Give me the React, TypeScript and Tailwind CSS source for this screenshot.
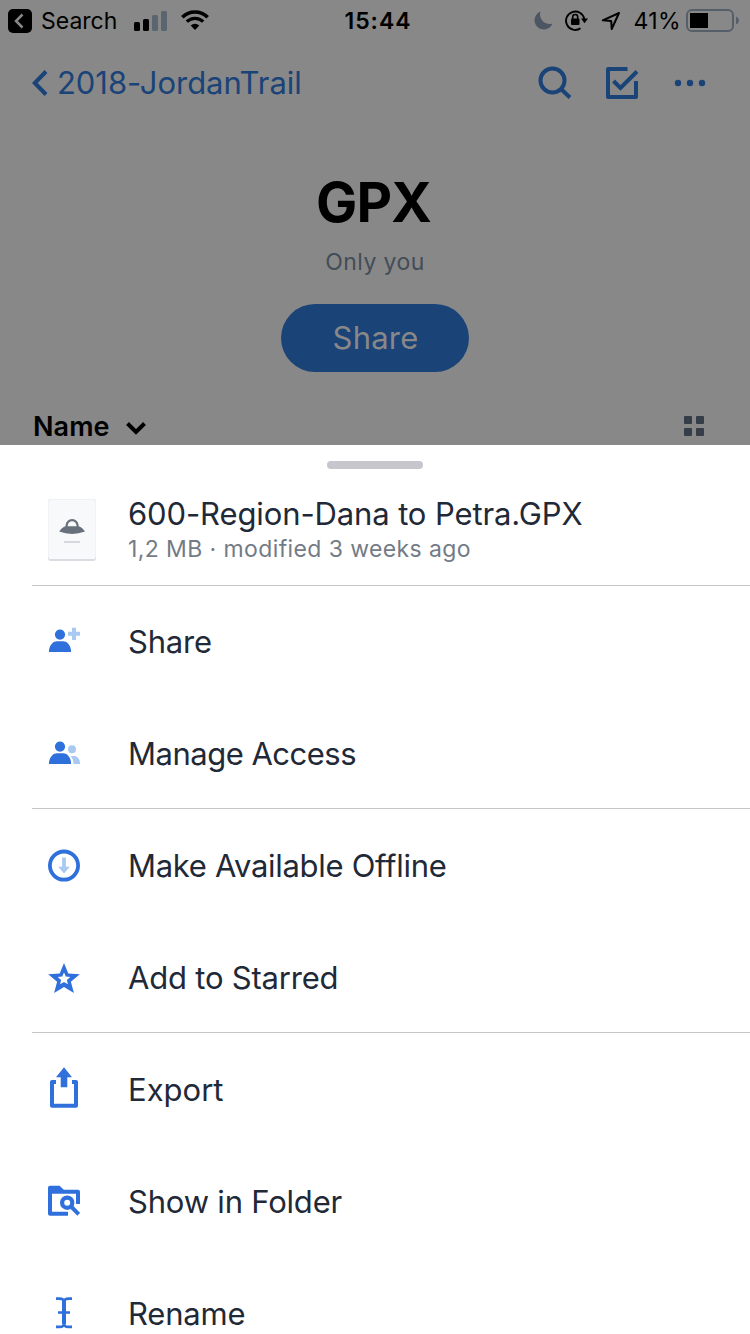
import type { ReactNode } from "react";

interface ActionRowProps {
  icon: ReactNode;
  label: string;
  className?: string;
}

function ActionRow({ icon, label, className = "" }: ActionRowProps) {
  return (
    <button className="flex h-[112px] w-full shrink-0 items-center pl-4 text-left">
      <svg width="32" height="48" viewBox="0 0 32 48" fill="none" className="shrink-0">
        {icon}
      </svg>
      <span className={`ml-12 whitespace-nowrap pt-0.5 text-[31px] leading-10 ${className}`}>
        {label}
      </span>
    </button>
  );
}

const BLUE = "#2f70dc";
const LIGHT = "#a9c9f2";

const person = (
  <g fill={BLUE}>
    <circle cx="12" cy="17.6" r="5.1" />
    <path d="M1 35v-1.6C1.6 27.6 5.4 24.3 9 24.3h6c3.800 0 7.400 3.300 8 9.100V35z" />
  </g>
);

const icons = {
  share: (
    <>
      {person}
      <path d="M24 10.700h4v4h4v4h-4v4.300h-4v-4.300h-4v-4h4z" fill={LIGHT} />
    </>
  ),
  access: (
    <>
      {person}
      <circle cx="24" cy="20.300" r="4" fill={LIGHT} />
      <path d="M22.500 27h4c3.200.4 5.300 3.200 5.500 7v1h-6.500c0-3.200-1-5.900-3-8z" fill={LIGHT} />
    </>
  ),
  offline: (
    <>
      <circle cx="16" cy="24.600" r="14.100" stroke={BLUE} strokeWidth="3.800" />
      <path d="M14.100 16.500h3.800v9.200h3.900L16 32.500l-5.800-6.800h3.900z" fill={LIGHT} />
    </>
  ),
  star: (
    <path
      fill={BLUE}
      fillRule="evenodd"
      d="M16 10l4.300 10.600L31.800 21.200l-8.900 7.500 3 11.200L16 34l-9.900 5.900 3-11.200L.2 21.200l11.500-.6zM16 19.400l-1.800 4.200-4.500.4 3.400 2.900-1 4.400L16 29l3.900 2.300-1-4.400 3.400-2.900-4.500-.4z"
    />
  ),
  export: (
    <>
      <path d="M8 17H4v23.700h24V17h-4" stroke={BLUE} strokeWidth="4" strokeLinejoin="round" />
      <path d="M16 2.300l8 10h-4.700v10h-6.600v-10H8z" fill={BLUE} />
    </>
  ),
  folder: (
    <>
      <path
        fill={BLUE}
        d="M2 8.700h9.500l4.300 4H30q2 0 2 2V27h-4V16.700H4v18h16v4H2q-2 0-2-2v-26q0-2 2-2z"
      />
      <circle cx="19.200" cy="25.700" r="5.100" stroke={BLUE} strokeWidth="4.200" />
      <path d="M22.500 29l8.300 8.300" stroke={BLUE} strokeWidth="4" />
    </>
  ),
  rename: (
    <>
      <path d="M16 12v23" stroke={BLUE} strokeWidth="4" />
      <path
        d="M8 9.600h3.500c2.500 0 4.500 1 4.500 3.500 0-2.500 2-3.500 4.500-3.500H24M8 37.900h3.500c2.500 0 4.500-1 4.500-3.500 0 2.500 2 3.500 4.500 3.500H24M10 23.500h12"
        stroke={BLUE}
        strokeWidth="2.600"
      />
    </>
  ),
};

function StatusBar() {
  return (
    <div className="grid h-10 grid-cols-[1fr_auto_1fr] items-center pt-0.5 text-black">
      <div className="flex items-center pl-2">
        <svg width="24" height="24" viewBox="0 0 24 24" fill="none">
          <rect width="24" height="24" rx="5" fill="#000" />
          <path d="M14.500 5.500L8 12l6.500 6.500" stroke="#888" strokeWidth="2.500" />
        </svg>
        <span className="ml-[9px] w-[85px] whitespace-nowrap text-[23px] leading-6">
          Search
        </span>
        <svg width="34" height="20" viewBox="0 0 34 20" className="ml-2">
          <rect y="11" width="6" height="9" rx="1.500" />
          <rect x="9" y="8" width="6" height="12" rx="1.500" />
          <rect x="18" y="4" width="6" height="16" rx="1.500" fill="#5b6570" />
          <rect x="27" width="6" height="20" rx="1.500" fill="#5b6570" />
        </svg>
        <svg width="28" height="20" viewBox="0 0 28 20" fill="none" stroke="#000" className="mb-0.5 ml-[13px]">
          <path d="M1.300 7.200a18 18 0 0 1 25.400 0" strokeWidth="3.600" />
          <path d="M5.800 11.700a11.600 11.600 0 0 1 16.400 0" strokeWidth="3.200" />
          <path d="M14 20l-4.300-4.600a6.300 6.300 0 0 1 8.600 0z" fill="#000" stroke="none" />
        </svg>
      </div>
      <span className="pl-1.5 text-[23px] font-semibold leading-6 tracking-[1px]">15:44</span>
      <div className="flex items-center justify-end pr-[10px]">
        <svg width="19" height="19" viewBox="0 0 19 19" className="mb-0.5 mr-3">
          <path d="M6.500.5a9.300 9.300 0 1 0 12 12A9.500 9.500 0 0 1 6.500.5z" fill="#4c5662" />
        </svg>
        <svg width="24" height="22" viewBox="0 0 24 22" fill="none" className="mb-[3px] mr-3">
          <path d="M15.500 19.300A9.200 9.200 0 1 1 19.300 10" stroke="#000" strokeWidth="1.900" />
          <path d="M16 9.500h7l-3.500 4.700z" fill="#000" />
          <rect x="6" y="9.500" width="8.500" height="6.500" rx="1" fill="#000" />
          <path d="M7.700 10V8a2.500 2.500 0 0 1 5 0v2" stroke="#000" strokeWidth="1.600" />
        </svg>
        <svg width="20" height="20" viewBox="0 0 20 20" fill="none" className="mr-3">
          <path d="M18 2L1.800 9.300l8.400.7.500 8z" stroke="#000" strokeWidth="2" strokeLinejoin="round" />
        </svg>
        <span className="whitespace-nowrap text-[23px] leading-6 tracking-[0.4px]">41%</span>
        <svg width="54" height="23" viewBox="0 0 54 23" fill="none" className="mb-px ml-[5px]">
          <rect x="1" y="1" width="46" height="21" rx="5" stroke="#555f6a" strokeWidth="2" />
          <rect x="4" y="4" width="18" height="15" fill="#000" />
          <path d="M50 7.500q3 1.500 3 4t-3 4z" fill="#555f6a" />
        </svg>
      </div>
    </div>
  );
}

function NavBar() {
  return (
    <div className="flex h-[86px] items-center pl-8 pr-11 text-[#1a4377]">
      <svg width="16" height="26" viewBox="0 0 16 26" fill="none">
        <path d="M14 1.500L2.800 13 14 24.500" stroke="currentColor" strokeWidth="4" />
      </svg>
      <span className="ml-[9px] whitespace-nowrap text-[31px] leading-10 tracking-[-0.05px]">
        2018-JordanTrail
      </span>
      <svg width="34" height="34" viewBox="0 0 34 34" fill="none" className="ml-auto">
        <circle cx="14.500" cy="14.500" r="12" stroke="currentColor" strokeWidth="4" />
        <path d="M23 23l9 8.500" stroke="currentColor" strokeWidth="4" />
      </svg>
      <svg width="34" height="34" viewBox="0 0 34 34" fill="none" className="ml-[33px]">
        <path d="M22.500 3H3v28h28V15" stroke="currentColor" strokeWidth="4" strokeLinejoin="round" />
        <path d="M8.500 15l7 7L32 5.500" stroke="currentColor" strokeWidth="4" />
      </svg>
      <svg width="32" height="8" viewBox="0 0 32 8" fill="currentColor" className="ml-[35px]">
        <circle cx="4" cy="4" r="3.200" />
        <circle cx="16" cy="4" r="3.200" />
        <circle cx="28" cy="4" r="3.200" />
      </svg>
    </div>
  );
}

function FileThumb() {
  return (
    <svg width="48" height="62" viewBox="0 0 48 62" fill="none" className="shrink-0">
      <rect width="48" height="62" rx="3" fill="#d9dde1" />
      <rect width="48" height="60" rx="3" fill="#f0f2f4" />
      <rect x="1" y="1" width="46" height="59" rx="2" fill="#f8f9fa" />
      <path d="M18.600 28v-1.300a5.500 5.500 0 0 1 11 0V28" stroke="#68707c" strokeWidth="2.200" />
      <path d="M11.200 32.600C13 30 15 28 17.500 27.200h13.200c2.500.8 4.500 2.800 6.300 5.400q-13 4.800-25.800 0z" fill="#68707c" />
      <path d="M16 43h16" stroke="#ccd0d5" strokeWidth="1.600" />
    </svg>
  );
}

export default function App() {
  return (
    <div className="flex h-[1334px] w-[750px] flex-col overflow-hidden bg-[#888888] font-['Inter',sans-serif]">
      <header className="flex h-[445px] shrink-0 flex-col">
        <StatusBar />
        <NavBar />
        <div className="flex flex-col items-center">
          <h1 className="mt-[43px] pr-[3px] text-[55px] font-bold leading-[66px] tracking-[-0.8px] text-black">
            GPX
          </h1>
          <p className="mt-3 text-[23px] leading-[30px] tracking-[0.4px] text-[#434d58]">Only you</p>
          <button className="mt-[27px] h-[68px] w-[188px] rounded-full bg-[#1a4377] pl-px text-[31px] tracking-[0.2px] text-[#888888]">
            Share
          </button>
        </div>
        <div className="mt-auto flex h-[37px] items-center justify-between pl-[33px] pr-[46px]">
          <div className="flex items-center">
            <span className="text-[27px] font-semibold leading-8 tracking-[0.1px] text-black">Name</span>
            <svg width="22" height="16" viewBox="0 0 22 16" fill="none" className="ml-[15px] mt-[3px]">
              <path d="M2.500 3.500L11 12l8.500-8.500" stroke="#000" strokeWidth="4" />
            </svg>
          </div>
          <svg width="20" height="20" viewBox="0 0 20 20" fill="#343d48" className="mb-0.5">
            <rect width="8" height="8" rx="1" />
            <rect x="12" width="8" height="8" rx="1" />
            <rect y="12" width="8" height="8" rx="1" />
            <rect x="12" y="12" width="8" height="8" rx="1" />
          </svg>
        </div>
      </header>

      <main className="flex-1 overflow-hidden bg-white pl-8 text-[#1f2937]">
        <div className="flex h-[140px] flex-col">
          <div className="ml-[295px] mt-4 h-2 w-24 shrink-0 rounded-full bg-[#c7c6cc]" />
          <div className="mt-[30px] flex pl-4">
            <FileThumb />
            <div className="ml-8 flex flex-col whitespace-nowrap">
              <span className="-mt-1 text-[31px] leading-[38px] tracking-[-0.12px]">
                600-Region-Dana to Petra.GPX
              </span>
              <span className="text-[23px] leading-8 tracking-[0.4px] text-[#737b86]">
                1,2 MB · modified 3 weeks ago
              </span>
            </div>
          </div>
        </div>
        <section className="h-[223px] border-t border-[#c6c6ca]">
          <div className="-mt-px">
            <ActionRow icon={icons.share} label="Share" className="tracking-[-0.2px]" />
            <ActionRow icon={icons.access} label="Manage Access" className="tracking-[-0.5px]" />
          </div>
        </section>
        <section className="h-[224px] border-t border-[#c6c6ca]">
          <ActionRow icon={icons.offline} label="Make Available Offline" className="tracking-[-0.3px]" />
          <ActionRow icon={icons.star} label="Add to Starred" className="tracking-[-0.2px]" />
        </section>
        <section className="border-t border-[#c6c6ca]">
          <ActionRow icon={icons.export} label="Export" />
          <ActionRow icon={icons.folder} label="Show in Folder" className="tracking-[-0.2px]" />
          <ActionRow icon={icons.rename} label="Rename" className="tracking-[-0.2px]" />
        </section>
      </main>
    </div>
  );
}
